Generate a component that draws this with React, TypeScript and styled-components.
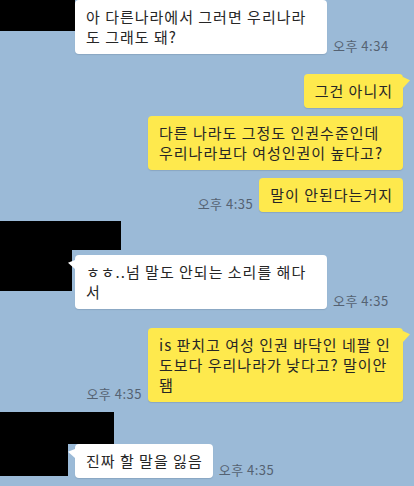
import styled, { createGlobalStyle, css } from "styled-components";

const GlobalStyle = createGlobalStyle`
  html, body {
    margin: 0;
    padding: 0;
    background: #9bbad7;
  }
  body {
    font-family: "Noto Sans CJK KR", "Noto Sans", sans-serif;
  }
`;

type Side = "left" | "right";

export default function App() {
  return (
    <>
      <GlobalStyle />
      <Screen>
        <LeftRow>
          <AvatarMask $w={75} $h={31} />
          <Line>
            <Bubble $side="left" $w={252}>
              {"아 다른나라에서 그러면 우리나라\n도 그래도 돼?"}
            </Bubble>
            <Time>오후 4:34</Time>
          </Line>
        </LeftRow>

        <RightLine $mt={20}>
          <Bubble $side="right" $tail>
            그건 아니지
          </Bubble>
        </RightLine>
        <RightLine $mt={8}>
          <Bubble $side="right" $w={255}>
            {"다른 나라도 그정도 인권수준인데\n우리나라보다 여성인권이 높다고?"}
          </Bubble>
        </RightLine>
        <RightLine $mt={8}>
          <Time>오후 4:35</Time>
          <Bubble $side="right">말이 안된다는거지</Bubble>
        </RightLine>

        <NameMask $w={121} $h={29} $mt={9} />
        <LeftRow>
          <AvatarMask $w={72} $h={41} />
          <Line $mt={5}>
            <Bubble $side="left" $w={252} $tail>
              {"ㅎㅎ..넘 말도 안되는 소리를 해다\n서"}
            </Bubble>
            <Time>오후 4:35</Time>
          </Line>
        </LeftRow>

        <RightLine $mt={19}>
          <Time>오후 4:35</Time>
          <Bubble $side="right" $w={255} $tail>
            {"is 판치고 여성 인권 바닥인 네팔 인\n도보다 우리나라가 낮다고? 말이안\n됌"}
          </Bubble>
        </RightLine>

        <NameMask $w={114} $h={32} $mt={10} />
        <LeftRow>
          <AvatarMask $w={68} $h={32} />
          <Line>
            <Bubble $side="left" $tail>
              진짜 할 말을 잃음
            </Bubble>
            <Time>오후 4:35</Time>
          </Line>
        </LeftRow>
      </Screen>
    </>
  );
}

const Screen = styled.div`
  width: 414px;
  height: 486px;
  overflow: hidden;
  display: flex;
  flex-direction: column;
  background: #9bbad7;
`;

const LeftRow = styled.div`
  display: grid;
  grid-template-columns: 75px 1fr;
  align-items: start;
`;

const AvatarMask = styled.div<{ $w: number; $h: number }>`
  width: ${(p) => p.$w}px;
  height: ${(p) => p.$h}px;
  background: #000;
`;

const NameMask = styled.div<{ $w: number; $h: number; $mt: number }>`
  width: ${(p) => p.$w}px;
  height: ${(p) => p.$h}px;
  margin-top: ${(p) => p.$mt}px;
  background: #000;
`;

const Line = styled.div<{ $mt?: number }>`
  display: flex;
  align-items: flex-end;
  gap: 6px;
  margin-top: ${(p) => p.$mt ?? 0}px;
`;

const RightLine = styled.div<{ $mt: number }>`
  display: flex;
  justify-content: flex-end;
  align-items: flex-end;
  gap: 6px;
  margin-top: ${(p) => p.$mt}px;
  padding-right: 11px;
`;

const Bubble = styled.div<{ $side: Side; $w?: number; $tail?: boolean }>`
  position: relative;
  box-sizing: border-box;
  ${(p) => (p.$w ? `width: ${p.$w}px;` : "")}
  padding: 7px 10px 7px 11px;
  border-radius: 4px;
  background: ${(p) => (p.$side === "right" ? "#fee94d" : "#ffffff")};
  box-shadow: 0 1px 1px rgba(60, 80, 100, 0.18);
  color: #262626;
  font-size: 15px;
  line-height: 20px;
  letter-spacing: 1px;
  white-space: pre-line;

  ${(p) =>
    p.$tail &&
    p.$side === "left" &&
    css`
      &::before {
        content: "";
        position: absolute;
        left: -7px;
        top: 5px;
        width: 7px;
        height: 9px;
        background: #ffffff;
        clip-path: polygon(100% 0, 0 30%, 100% 100%);
      }
    `}

  ${(p) =>
    p.$tail &&
    p.$side === "right" &&
    css`
      &::after {
        content: "";
        position: absolute;
        right: -7px;
        top: 3px;
        width: 7px;
        height: 11px;
        background: #fee94d;
        clip-path: polygon(0 0, 100% 30%, 0 100%);
      }
    `}
`;

const Time = styled.span`
  flex-shrink: 0;
  font-size: 13px;
  line-height: 16px;
  letter-spacing: 0.5px;
  color: #556272;
  white-space: nowrap;
`;
